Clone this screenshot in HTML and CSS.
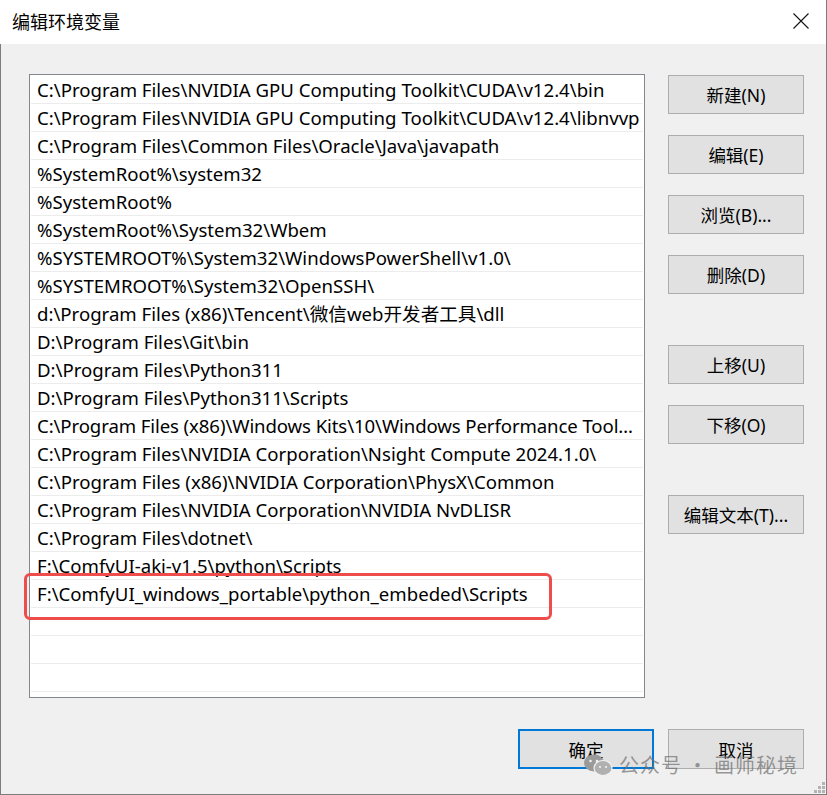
FILE: index.html
```html
<!DOCTYPE html>
<html lang="zh-CN">
<head>
<meta charset="utf-8">
<title>编辑环境变量</title>
<link rel="stylesheet" href="styles.css">
</head>
<body>
<div class="window">
  <div class="titlebar">
    <span class="title">编辑环境变量</span>
    <svg class="close" width="16" height="16" viewBox="0 0 16 16"><path d="M0.5 0.5 L15.5 15.5 M15.5 0.5 L0.5 15.5" stroke="#111" stroke-width="1.1" fill="none"/></svg>
  </div>
  <div class="body">
    <div class="main">
      <div class="list">
        <div class="row">C:\Program Files\NVIDIA GPU Computing Toolkit\CUDA\v12.4\bin</div>
        <div class="row">C:\Program Files\NVIDIA GPU Computing Toolkit\CUDA\v12.4\libnvvp</div>
        <div class="row">C:\Program Files\Common Files\Oracle\Java\javapath</div>
        <div class="row">%SystemRoot%\system32</div>
        <div class="row">%SystemRoot%</div>
        <div class="row">%SystemRoot%\System32\Wbem</div>
        <div class="row">%SYSTEMROOT%\System32\WindowsPowerShell\v1.0\</div>
        <div class="row">%SYSTEMROOT%\System32\OpenSSH\</div>
        <div class="row">d:\Program Files (x86)\Tencent\微信web开发者工具\dll</div>
        <div class="row">D:\Program Files\Git\bin</div>
        <div class="row">D:\Program Files\Python311</div>
        <div class="row">D:\Program Files\Python311\Scripts</div>
        <div class="row tight">C:\Program Files (x86)\Windows Kits\10\Windows Performance Toolkit\</div>
        <div class="row">C:\Program Files\NVIDIA Corporation\Nsight Compute 2024.1.0\</div>
        <div class="row">C:\Program Files (x86)\NVIDIA Corporation\PhysX\Common</div>
        <div class="row">C:\Program Files\NVIDIA Corporation\NVIDIA NvDLISR</div>
        <div class="row">C:\Program Files\dotnet\</div>
        <div class="row">F:\ComfyUI-aki-v1.5\python\Scripts</div>
        <div class="row">F:\ComfyUI_windows_portable\python_embeded\Scripts</div>
        <div class="row"></div>
        <div class="row"></div>
        <div class="row"></div>
      </div>
      <div class="highlight"></div>
      <div class="side">
        <div class="group">
          <button class="btn">新建(N)</button>
          <button class="btn">编辑(E)</button>
          <button class="btn">浏览(B)...</button>
          <button class="btn">删除(D)</button>
        </div>
        <div class="group">
          <button class="btn">上移(U)</button>
          <button class="btn">下移(O)</button>
        </div>
        <div class="group">
          <button class="btn">编辑文本(T)...</button>
        </div>
      </div>
    </div>
    <div class="footer">
      <button class="btn default">确定</button>
      <button class="btn">取消</button>
    </div>
    <div class="watermark">
      <svg width="30" height="22" viewBox="0 0 30 22">
        <ellipse cx="11" cy="9" rx="10" ry="8.5" fill="#9a9a9a"/>
        <ellipse cx="20" cy="14" rx="9" ry="7.5" fill="#b0b0b0" stroke="#f0f0f0" stroke-width="1.2"/>
        <circle cx="7.5" cy="7" r="1.3" fill="#f0f0f0"/>
        <circle cx="14" cy="7" r="1.3" fill="#f0f0f0"/>
        <circle cx="17" cy="13" r="1.1" fill="#f0f0f0"/>
        <circle cx="23" cy="13" r="1.1" fill="#f0f0f0"/>
      </svg>
      <span>公众号 · 画师秘境</span>
    </div>
    <div class="grip">
      <i class="d1"></i><i class="d2"></i><i class="d3"></i><i class="d4"></i><i class="d5"></i><i class="d6"></i>
    </div>
  </div>
</div>
</body>
</html>
```

FILE: styles.css
```css
html, body {
  margin: 0;
  padding: 0;
  background: #f0f0f0;
}
body {
  width: 827px;
  height: 795px;
  overflow: hidden;
  font-family: "Noto Sans", "Noto Sans CJK SC", sans-serif;
  color: #000;
}
.window {
  width: 827px;
  height: 795px;
  box-sizing: border-box;
  border-right: 1px solid #7d7d7d;
  display: flex;
  flex-direction: column;
}
.titlebar {
  height: 44px;
  background: #fff;
  display: flex;
  align-items: center;
  justify-content: space-between;
  padding: 0 17px 0 12px;
  flex-shrink: 0;
}
.title {
  font-family: "Noto Sans CJK SC", sans-serif;
  font-size: 18px;
  margin-top: -3px;
}
.close {
  margin-top: -2px;
}
.body {
  flex: 1;
  position: relative;
  background: #f0f0f0;
  border-left: 1px solid #7d7d7d;
  border-bottom: 1px solid #7d7d7d;
  padding: 30px 22px 0 28px;
}
.main {
  position: relative;
  display: flex;
  gap: 23px;
}
.list {
  width: 616px;
  height: 624px;
  flex-shrink: 0;
  box-sizing: border-box;
  border: 1px solid #828790;
  background: #fff;
  padding: 1px 1px 0 1px;
  overflow: hidden;
}
.row {
  height: 27px;
  border-bottom: 1px solid #ececec;
  line-height: 27px;
  font-size: 18.6px;
  padding-left: 6px;
  padding-right: 1px;
  white-space: nowrap;
  overflow: hidden;
  text-overflow: ellipsis;
}
.row.tight {
  letter-spacing: -0.1px;
}
.highlight {
  position: absolute;
  left: -5px;
  top: 499px;
  width: 528px;
  height: 47px;
  box-sizing: border-box;
  border: 3px solid #ef4c4c;
  border-radius: 6px;
}
.side {
  display: flex;
  flex-direction: column;
  gap: 51px;
  padding-top: 1px;
}
.group {
  display: flex;
  flex-direction: column;
  gap: 21px;
}
.btn {
  width: 136px;
  height: 39px;
  box-sizing: border-box;
  background: #e1e1e1;
  border: 1px solid #adadad;
  font-family: "Noto Sans", "Noto Sans CJK SC", sans-serif;
  font-size: 17.5px;
  color: #000;
  padding: 0;
  margin: 0;
}
.btn.default {
  border: 2px solid #0078d7;
}
.footer {
  display: flex;
  justify-content: flex-end;
  gap: 14px;
  margin-top: 31px;
}
.footer .btn {
  height: 40px;
}
.watermark {
  position: absolute;
  left: 582px;
  top: 706px;
  display: flex;
  align-items: center;
  gap: 6px;
  color: rgba(110, 110, 110, 0.7);
  font-family: "Noto Sans CJK SC", sans-serif;
  font-size: 20px;
  letter-spacing: 1px;
}
.grip {
  position: absolute;
  right: 1px;
  bottom: 1px;
  width: 12px;
  height: 12px;
}
.grip i {
  position: absolute;
  width: 3px;
  height: 3px;
  background: #b4b4b4;
}
.grip .d1 { right: 0; bottom: 0; }
.grip .d2 { right: 4px; bottom: 0; }
.grip .d3 { right: 8px; bottom: 0; }
.grip .d4 { right: 0; bottom: 4px; }
.grip .d5 { right: 4px; bottom: 4px; }
.grip .d6 { right: 0; bottom: 8px; }
```
